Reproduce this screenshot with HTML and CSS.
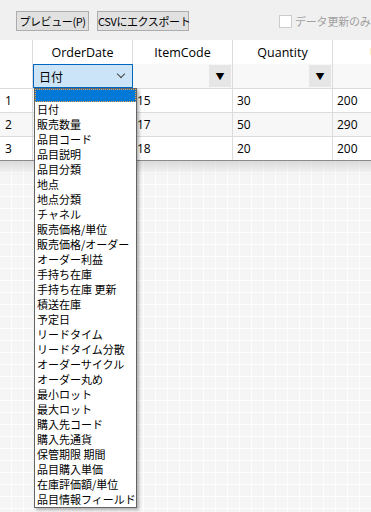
FILE: index.html
```html
<!DOCTYPE html>
<html lang="ja">
<head>
    <meta charset="UTF-8">
    <title>Export</title>
    <link rel="stylesheet" href="styles.css">
</head>
<body>
    <div class="toolbar">
        <button class="btn preview">プレビュー(P)</button>
        <button class="btn csv">CSVにエクスポート</button>
        <label class="check"><span class="box"></span>データ更新のみ</label>
    </div>
    <div class="grid">
        <div class="row head">
            <div class="cell rh"></div>
            <div class="cell">OrderDate</div>
            <div class="cell">ItemCode</div>
            <div class="cell">Quantity</div>
            <div class="cell last">Un</div>
        </div>
        <div class="row filter">
            <div class="cell rh"></div>
            <div class="cell combo"><span>日付</span><span class="chev"></span></div>
            <div class="cell"><span class="drop">&#9660;</span></div>
            <div class="cell"><span class="drop">&#9660;</span></div>
            <div class="cell last"></div>
        </div>
        <div class="row data">
            <div class="cell rh">1</div>
            <div class="cell"></div>
            <div class="cell">15</div>
            <div class="cell">30</div>
            <div class="cell last">200</div>
        </div>
        <div class="row data alt">
            <div class="cell rh">2</div>
            <div class="cell"></div>
            <div class="cell">17</div>
            <div class="cell">50</div>
            <div class="cell last">290</div>
        </div>
        <div class="row data">
            <div class="cell rh">3</div>
            <div class="cell"></div>
            <div class="cell">18</div>
            <div class="cell">20</div>
            <div class="cell last">200</div>
        </div>
    </div>
    <div class="empty"></div>

    <ul class="list">
        <li class="sel"></li>
        <li>日付</li>
        <li>販売数量</li>
        <li>品目コード</li>
        <li>品目説明</li>
        <li>品目分類</li>
        <li>地点</li>
        <li>地点分類</li>
        <li>チャネル</li>
        <li>販売価格/単位</li>
        <li>販売価格/オーダー</li>
        <li>オーダー利益</li>
        <li>手持ち在庫</li>
        <li>手持ち在庫 更新</li>
        <li>積送在庫</li>
        <li>予定日</li>
        <li>リードタイム</li>
        <li>リードタイム分散</li>
        <li>オーダーサイクル</li>
        <li>オーダー丸め</li>
        <li>最小ロット</li>
        <li>最大ロット</li>
        <li>購入先コード</li>
        <li>購入先通貨</li>
        <li>保管期限 期間</li>
        <li>品目購入単価</li>
        <li>在庫評価額/単位</li>
        <li>品目情報フィールド</li>
    </ul>
</body>
</html>
```

FILE: styles.css
```css
* {
    padding: 0;
    margin: 0;
    box-sizing: border-box;
}
body {
    width: 371px;
    height: 512px;
    overflow: hidden;
    position: relative;
    font-family: "Open Sans", "Noto Sans CJK JP", sans-serif;
    font-size: 12px;
    color: #000;
    background: #fff;
}
.toolbar {
    height: 40px;
    background: #f0f0f0;
    display: flex;
    align-items: center;
    padding: 2px 0 0 16px;
    gap: 8px;
    white-space: nowrap;
}
.btn {
    height: 20px;
    padding: 0;
    background: #e1e1e1;
    border: 1px solid #adadad;
    font-family: "Noto Sans CJK JP", sans-serif;
    font-size: 11px;
    line-height: 18px;
    letter-spacing: -0.4px;
    color: #000;
    white-space: nowrap;
}
.btn.preview {
    width: 73px;
}
.btn.csv {
    width: 92px;
}
.check {
    margin-left: 82px;
    display: flex;
    align-items: center;
    gap: 3px;
    color: #a0a0a0;
    font-family: "Noto Sans CJK JP", sans-serif;
    font-size: 11px;
    letter-spacing: -0.2px;
}
.box {
    width: 13px;
    height: 13px;
    border: 1px solid #cccccc;
    background: #fff;
}
.grid {
    width: 371px;
    overflow: hidden;
}
.row {
    display: flex;
    height: 24px;
    white-space: nowrap;
}
.cell {
    flex: 0 0 100px;
    border-right: 1px solid #dcdcdc;
    display: flex;
    align-items: center;
    padding-left: 4px;
}
.cell.rh {
    flex-basis: 33px;
    padding-left: 5px;
}
.head .cell {
    justify-content: center;
    padding-left: 0;
    font-size: 12.5px;
}
.head .cell.last {
    justify-content: flex-start;
    padding-left: 37px;
}
.filter {
    background: #f8f8f8;
}
.filter .cell {
    justify-content: flex-end;
    padding: 1px 1px 1px 0;
}
.filter .cell.rh {
    background: #fff;
}
.combo {
    background: #cce4f7;
    border: 1px solid #0067c0 !important;
    justify-content: space-between !important;
    padding: 0 8px 0 5px !important;
    font-family: "Noto Sans CJK JP", sans-serif;
}
.chev {
    width: 6px;
    height: 6px;
    border-right: 1px solid #444;
    border-bottom: 1px solid #444;
    transform: rotate(45deg);
    margin-top: -4px;
}
.drop {
    width: 22px;
    height: 22px;
    background: #e6e6e6;
    display: flex;
    align-items: center;
    justify-content: center;
    font-size: 9px;
}
.data {
    border-top: 1px solid #dcdcdc;
}
.data.alt {
    background: #f7f7f7;
}
.empty {
    height: 352px;
    border-top: 1px solid #8a8a8a;
    background-color: #f5f5f5;
    background-image:
        linear-gradient(to bottom, rgba(200,200,200,0.6), rgba(255,255,255,0) 14px),
        repeating-linear-gradient(to right, transparent 0 11px, #fdfdfd 11px 12px),
        repeating-linear-gradient(to bottom, transparent 0 11px, #fdfdfd 11px 12px);
}
.list {
    position: absolute;
    left: 34px;
    top: 88px;
    width: 103px;
    list-style: none;
    background: #fff;
    border: 1px solid #646464;
    box-shadow: 2px 2px 3px rgba(0,0,0,0.3);
    font-family: "Noto Sans CJK JP", sans-serif;
    font-size: 11px;
}
.list li {
    height: 15px;
    line-height: 15px;
    padding-left: 2px;
    white-space: nowrap;
    overflow: hidden;
}
.list li.sel {
    height: 13px;
    background: #0078d7;
    outline: 1px dotted #f0a040;
    outline-offset: -1px;
}
```
